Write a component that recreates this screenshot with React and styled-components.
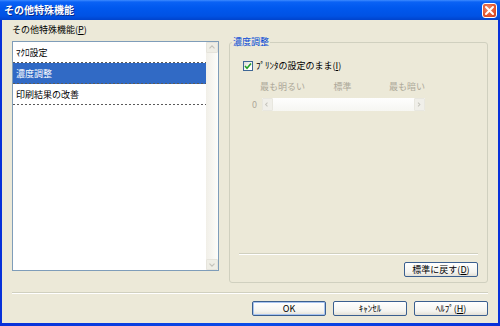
import styled, { createGlobalStyle } from "styled-components"

const GlobalStyle = createGlobalStyle`
  html, body { margin: 0; padding: 0; }
  body {
    font-family: "Noto Sans CJK JP", "Noto Sans", sans-serif;
    font-size: 9px;
    color: #000;
  }
  #root { width: 500px; height: 326px; }
`

const Chevron = ({ dir = "up", color = "#c4c3bb" }) => {
  const pts = {
    up: "3,6.5 6,3.5 9,6.5",
    down: "3,4.5 6,7.5 9,4.5",
    left: "6,3 3.5,5.5 6,8",
    right: "4,3 6.5,5.5 4,8",
  }[dir]
  return (
    <svg width="12" height="11" viewBox="0 0 12 11">
      <polyline points={pts} fill="none" stroke={color} strokeWidth="1.4" />
    </svg>
  )
}

const App = () => {
  return (
    <>
      <GlobalStyle />
      <Window>
        <TitleBar>
          <TitleText>その他特殊機能</TitleText>
          <CloseButton>
            <svg width="13" height="13" viewBox="0 0 13 13">
              <path d="M3 3 L10 10 M10 3 L3 10" stroke="#fff" strokeWidth="2" strokeLinecap="round" />
            </svg>
          </CloseButton>
        </TitleBar>
        <Body>
          <MainRow>
            <LeftCol>
              <FieldLabel>その他特殊機能(<u>P</u>)</FieldLabel>
              <ListBox>
                <Items>
                  <Item>ﾏｸﾛ設定</Item>
                  <Item $selected>濃度調整</Item>
                  <Item>印刷結果の改善</Item>
                </Items>
                <ScrollBar>
                  <ScrollButton><Chevron dir="up" /></ScrollButton>
                  <ScrollTrack />
                  <ScrollButton><Chevron dir="down" /></ScrollButton>
                </ScrollBar>
              </ListBox>
            </LeftCol>
            <GroupBox>
              <GroupLegend>濃度調整</GroupLegend>
              <GroupInner>
                <CheckRow>
                  <CheckBox>
                    <svg width="8" height="8" viewBox="0 0 8 8">
                      <path d="M1 4 L3 6.2 L7 1.5" fill="none" stroke="#21a121" strokeWidth="1.6" />
                    </svg>
                  </CheckBox>
                  <span>ﾌﾟﾘﾝﾀの設定のまま(<u>I</u>)</span>
                </CheckRow>
                <ScaleLabels>
                  <span>最も明るい</span>
                  <span>標準</span>
                  <span>最も暗い</span>
                </ScaleLabels>
                <SliderRow>
                  <ZeroLabel>0</ZeroLabel>
                  <Track>
                    <TrackButton><Chevron dir="left" /></TrackButton>
                    <TrackBody />
                    <TrackButton><Chevron dir="right" /></TrackButton>
                  </Track>
                </SliderRow>
                <Spacer />
                <Separator />
                <ResetRow>
                  <Button>標準に戻す(<u>D</u>)</Button>
                </ResetRow>
              </GroupInner>
            </GroupBox>
          </MainRow>
          <BottomSeparator />
          <ButtonRow>
            <Button $default>OK</Button>
            <Button>ｷｬﾝｾﾙ</Button>
            <Button>ﾍﾙﾌﾟ(<u>H</u>)</Button>
          </ButtonRow>
        </Body>
      </Window>
    </>
  )
}

//styling starts----------------------------------------
const XpBlue = "#0046d5"
const Disabled = "#aca899"

const Window = styled.div`
  width: 500px;
  height: 326px;
  display: flex;
  flex-direction: column;
  background: linear-gradient(to right, #0831d9, #0a4ce8 50%, #0831d9);
`

const TitleBar = styled.div`
  height: 20px;
  flex: 0 0 20px;
  display: flex;
  align-items: center;
  justify-content: space-between;
  padding: 0 3px 0 4px;
  background: linear-gradient(#3d8bff 0, #0a62f5 2px, #0058ee 40%, #0052e4 80%, #0043cc 100%);
`

const TitleText = styled.div`
  color: #fff;
  font-weight: bold;
  font-size: 10px;
  line-height: 14px;
  text-shadow: 1px 1px 0 #0a2a8a;
`

const CloseButton = styled.div`
  width: 15px;
  height: 15px;
  box-sizing: border-box;
  border: 1px solid #fff;
  border-radius: 3px;
  display: flex;
  align-items: center;
  justify-content: center;
  background: radial-gradient(circle at 40% 35%, #f08a6a, #e0552f 60%, #c8401d);
`

const Body = styled.div`
  flex: 1;
  margin: 0 2px 3px 2px;
  background: #ece9d8;
  padding: 4px 10px 0 10px;
  display: flex;
  flex-direction: column;
`

const MainRow = styled.div`
  display: flex;
  gap: 10px;
  height: 259px;
`

const LeftCol = styled.div`
  width: 207px;
  display: flex;
  flex-direction: column;
`

const FieldLabel = styled.div`
  height: 17px;
  line-height: 12px;
`

const ListBox = styled.div`
  height: 230px;
  box-sizing: border-box;
  border: 1px solid #7f9db9;
  background: #fff;
  display: flex;
`

const Items = styled.div`
  flex: 1;
  display: flex;
  flex-direction: column;
`

const Item = styled.div`
  height: 21px;
  box-sizing: border-box;
  padding-left: 3px;
  padding-bottom: 1px;
  display: flex;
  align-items: center;
  color: ${(p) => (p.$selected ? "#fff" : "#000")};
  background-color: ${(p) => (p.$selected ? "#316ac5" : "transparent")};
  background-image: linear-gradient(to right, #5a5a5a 50%, transparent 50%);
  background-size: 4px 1px;
  background-repeat: repeat-x;
  background-position: left bottom;
`

const ScrollBar = styled.div`
  width: 12px;
  display: flex;
  flex-direction: column;
  background: linear-gradient(to right, #f1efe8, #fdfdfa);
`

const ScrollButton = styled.div`
  height: 11px;
  box-sizing: border-box;
  border: 1px solid #e6e4dc;
  border-radius: 1px;
  background: #efeee6;
  display: flex;
  align-items: center;
  justify-content: center;
  svg { display: block; }
`

const ScrollTrack = styled.div`
  flex: 1;
`

const GroupBox = styled.fieldset`
  margin: 12px 0 0 0;
  padding: 0;
  width: 259px;
  height: 247px;
  box-sizing: border-box;
  border: 1px solid #d0d0bf;
  border-radius: 3px;
  display: flex;
  flex-direction: column;
  min-width: 0;
`

const GroupLegend = styled.legend`
  margin-left: 2px;
  padding: 0 1px;
  color: ${XpBlue};
  line-height: 12px;
`

const GroupInner = styled.div`
  flex: 1;
  display: flex;
  flex-direction: column;
  padding: 0 9px 5px 9px;
`

const CheckRow = styled.div`
  margin-top: 12px;
  margin-left: 4px;
  height: 12px;
  display: flex;
  align-items: center;
  gap: 3px;
  line-height: 12px;
`

const CheckBox = styled.div`
  width: 10px;
  height: 10px;
  box-sizing: border-box;
  border: 1px solid #3f6796;
  background: linear-gradient(135deg, #dcdcd5, #fff 70%);
  display: flex;
  align-items: center;
  justify-content: center;
`

const ScaleLabels = styled.div`
  margin-top: 9px;
  margin-left: 21px;
  width: 165px;
  line-height: 12px;
  display: grid;
  grid-template-columns: 1fr auto 1fr;
  color: ${Disabled};
  span:last-child { text-align: right; }
`

const SliderRow = styled.div`
  margin-top: 5px;
  margin-left: 13px;
  height: 13px;
  display: flex;
  align-items: center;
  gap: 5px;
`

const ZeroLabel = styled.span`
  color: ${Disabled};
  width: 5px;
  line-height: 12px;
`

const Track = styled.div`
  width: 163px;
  height: 13px;
  display: flex;
  background: linear-gradient(#fefefe, #f6f6f2);
`

const TrackButton = styled.div`
  width: 11px;
  box-sizing: border-box;
  border: 1px solid #e8e7df;
  border-radius: 1px;
  background: #f0efe9;
  display: flex;
  align-items: center;
  justify-content: center;
  svg { display: block; }
`

const TrackBody = styled.div`
  flex: 1;
`

const Spacer = styled.div`
  flex: 1;
`

const Separator = styled.div`
  height: 1px;
  border-top: 1px solid #d0d0bf;
  background: #fff;
`

const ResetRow = styled.div`
  margin-top: 7px;
  display: flex;
  justify-content: flex-end;
`

const Button = styled.div`
  width: 74px;
  height: 15px;
  box-sizing: border-box;
  border: 1px solid #3a5f8f;
  border-radius: 2px;
  background: linear-gradient(#ffffff, #f4f4f0 70%, #e3e0d6);
  box-shadow: ${(p) => (p.$default ? "inset 0 0 0 1px #a8c4f0" : "none")};
  display: flex;
  align-items: center;
  justify-content: center;
  line-height: 12px;
  color: #000;
`

const BottomSeparator = styled.div`
  margin-top: 9px;
  height: 1px;
  border-top: 1px solid #d0d0bf;
  background: #fff;
`

const ButtonRow = styled.div`
  margin-top: 7px;
  display: flex;
  justify-content: flex-end;
  gap: 7px;
`

export default App
